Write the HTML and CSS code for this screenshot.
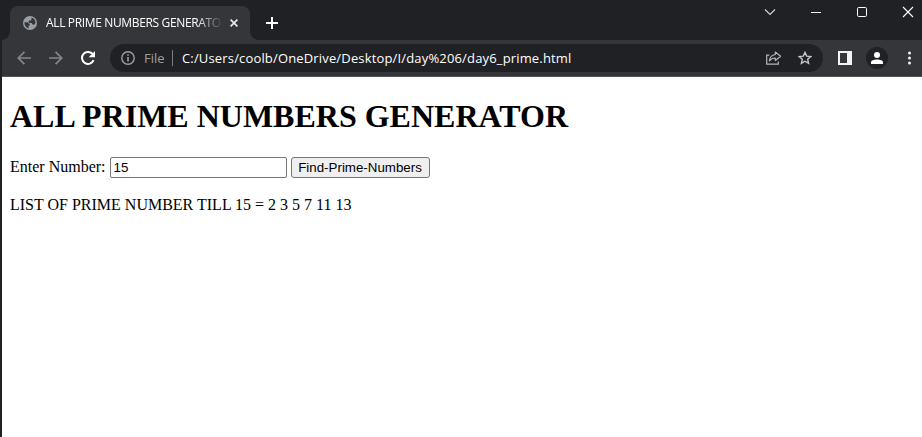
FILE: index.html
```html
<!DOCTYPE html>
<html lang="en">
<head>
<meta charset="utf-8">
<title>ALL PRIME NUMBERS GENERATOR</title>
<link rel="stylesheet" href="styles.css">
</head>
<body>
<div class="window">
  <header class="tabstrip">
    <div class="tab">
      <svg class="globe" width="14" height="14" viewBox="0 0 14 14"><circle cx="7" cy="7" r="7" fill="#9aa0a6"/><path d="M1.5 6.2H4.6L6.8 8.2V9.6H5.6V12.2C3 11.6 1.2 9 1.5 6.2ZM8.6 1.6C11 2.3 12.6 4.6 12.4 7.3L11.2 8.8 9.4 8.4 8.6 7H6.2L5.4 5.6 6.4 4.4H8.2Z" fill="#35363a"/></svg>
      <span class="tab-title">ALL PRIME NUMBERS GENERATOR</span>
      <svg class="tab-close" width="8" height="8" viewBox="0 0 8 8"><path d="M.6.6 7.4 7.4M7.4.6.6 7.4" stroke="#e8eaed" stroke-width="1.7"/></svg>
    </div>
    <svg class="new-tab" width="12" height="12" viewBox="0 0 12 12"><path d="M6 0V12M0 6H12" stroke="#fff" stroke-width="2"/></svg>
    <div class="controls">
      <svg width="12" height="12" viewBox="0 0 12 12"><path d="M1 3.5 6 8.5 11 3.5" stroke="#d5d6d8" stroke-width="1.1"/></svg>
      <svg width="12" height="12" viewBox="0 0 12 12"><path d="M1 6.5H11" stroke="#fff"/></svg>
      <svg width="12" height="12" viewBox="0 0 12 12"><rect x="1.5" y="1.5" width="9" height="9" rx="1.2" stroke="#fff"/></svg>
      <svg width="12" height="12" viewBox="0 0 12 12"><path d="M1 1 11 11M11 1 1 11" stroke="#fff" stroke-width="1.1"/></svg>
    </div>
  </header>
  <nav class="toolbar">
    <svg class="back" width="14" height="14" viewBox="0 0 14 14"><path d="M14 7H1.4M7.4.9 1.3 7 7.4 13.1" stroke="#86878a" stroke-width="1.7"/></svg>
    <svg class="forward" width="14" height="14" viewBox="0 0 14 14"><path d="M0 7H12.6M6.6.9 12.7 7 6.6 13.1" stroke="#86878a" stroke-width="1.7"/></svg>
    <svg class="reload" width="14" height="14" viewBox="0 0 14 14"><path d="M12.6 9.2A6 6 0 1 1 11.4 2.8L12 3.5" stroke="#fff" stroke-width="2"/><path d="M14 0V6.3H7.6Z" fill="#fff"/></svg>
    <div class="omnibox">
      <svg class="info" width="14" height="14" viewBox="0 0 14 14"><circle cx="7" cy="7" r="6.2" stroke="#9aa0a6" stroke-width="1.4"/><path d="M7 3.2V4.8M7 6V10.6" stroke="#9aa0a6" stroke-width="1.6"/></svg>
      <span class="scheme">File</span>
      <span class="divider"></span>
      <span class="url">C:/Users/coolb/OneDrive/Desktop/I/day%206/day6_prime.html</span>
      <svg class="share" width="16" height="14" viewBox="0 0 16 14"><path d="M3.3 4.2H.7V13.2H12.3V10.6" stroke="#b4b6b9" stroke-width="1.2"/><path d="M9.3 1 14.6 5.3 9.3 9.5V7C6.7 6.9 4.9 7.8 3.4 9.9 3.7 6.6 5.8 4 9.3 3.5Z" stroke="#b4b6b9" stroke-width="1.2" stroke-linejoin="round"/></svg>
      <svg class="star" width="14" height="14" viewBox="0 0 14 14"><path d="M7 1.4 8.7 5.1 12.8 5.5 9.7 8.2 10.6 12.4 7 10.2 3.4 12.4 4.3 8.2 1.2 5.5 5.3 5.1Z" stroke="#c4c6c9" stroke-width="1.4"/></svg>
    </div>
    <svg class="panel" width="14" height="14" viewBox="0 0 14 14"><path d="M0 0H14V14H0ZM2 2V12H9V2Z" fill="#f1f3f4" fill-rule="evenodd"/></svg>
    <svg class="profile" width="22" height="22" viewBox="0 0 22 22"><circle cx="11" cy="11" r="11" fill="#202124"/><circle cx="11" cy="8" r="3" fill="#fff"/><path d="M5 17V15.4C5 11.6 17 11.6 17 15.4V17Z" fill="#fff"/></svg>
    <svg class="more" width="3" height="14" viewBox="0 0 3 14"><circle cx="1.5" cy="2" r="1.5" fill="#f1f3f4"/><circle cx="1.5" cy="7" r="1.5" fill="#f1f3f4"/><circle cx="1.5" cy="12" r="1.5" fill="#f1f3f4"/></svg>
  </nav>
  <main class="page">
    <h1>ALL PRIME NUMBERS GENERATOR</h1>
    <label for="num">Enter Number:</label>
    <input id="num" type="text" value="15">
    <button type="button">Find-Prime-Numbers</button>
    <p>LIST OF PRIME NUMBER TILL 15 = 2 3 5 7 11 13</p>
  </main>
</div>
</body>
</html>
```
FILE: styles.css
```css
* { box-sizing: border-box; }

body {
  margin: 0;
  height: 437px;
  overflow: hidden;
  background: #fff;
}

svg {
  display: block;
  flex: none;
  fill: none;
}

.window {
  height: 437px;
  border-left: 2px solid #202124;
  font-family: "Open Sans", sans-serif;
}

.tabstrip {
  display: flex;
  height: 40px;
  background: #202124;
}

.tab {
  position: relative;
  display: flex;
  align-items: center;
  width: 240px;
  height: 34px;
  margin: 6px 0 0 8px;
  padding-left: 13px;
  border-radius: 8px 8px 0 0;
  background: #35363a;
}

.tab::before,
.tab::after {
  content: "";
  position: absolute;
  bottom: 0;
  width: 8px;
  height: 8px;
}

.tab::before {
  left: -8px;
  background: radial-gradient(circle at 0 0, #202124 7.5px, #35363a 8px);
}

.tab::after {
  right: -8px;
  background: radial-gradient(circle at 100% 0, #202124 7.5px, #35363a 8px);
}

.tab-title {
  width: 175px;
  margin-left: 9px;
  overflow: hidden;
  color: #fff;
  font-size: 12px;
  line-height: 18px;
  letter-spacing: -0.35px;
  white-space: nowrap;
  -webkit-mask-image: linear-gradient(to right, #000 150px, transparent 177px);
  mask-image: linear-gradient(to right, #000 150px, transparent 177px);
}

.tab-close { margin-left: 9px; }

.new-tab { margin: 17px 0 0 16px; }

.controls {
  display: flex;
  gap: 34px;
  margin: 6px 8px 0 auto;
}

.toolbar {
  display: flex;
  align-items: center;
  height: 37px;
  padding: 0 11px 0 15px;
  border-bottom: 1px solid #57555b;
  background: #35363a;
}

.forward { margin-left: 18px; }

.reload { margin-left: 18px; }

.omnibox {
  display: flex;
  align-items: center;
  width: 713px;
  height: 28px;
  margin-left: 15px;
  padding: 0 11px;
  border-radius: 14px;
  background: #202124;
  font-size: 13px;
  line-height: 20px;
}

.scheme {
  width: 28px;
  margin-left: 9px;
  color: #9aa0a6;
}

.divider {
  width: 1px;
  height: 16px;
  background: #7b7d80;
}

.url {
  margin-left: 9px;
  color: #fff;
  letter-spacing: 0.16px;
  white-space: nowrap;
}

.share { margin-left: auto; }

.star { margin-left: 16px; }

.panel { margin-left: 15px; }

.profile { margin-left: 14px; }

.more { margin-left: auto; }

.page {
  display: flow-root;
  padding: 0 8px;
  color: #000;
  font: 16px "Liberation Serif", serif;
}

.page h1 {
  margin: 21px 0 22px;
  font-size: 32px;
  line-height: 37px;
}

.page input {
  width: 177px;
  height: 21px;
  padding: 1px 2px 1px 3px;
  border: 1px solid #767676;
  border-radius: 2px;
  font: 13.333px "Liberation Sans", sans-serif;
}

.page button {
  width: 139px;
  height: 21px;
  padding: 1px 6px;
  border: 1px solid #767676;
  border-radius: 3px;
  background: #efefef;
  color: #000;
  font: 13.333px "Liberation Sans", sans-serif;
}

.page p { margin: 18px 0; }
```
